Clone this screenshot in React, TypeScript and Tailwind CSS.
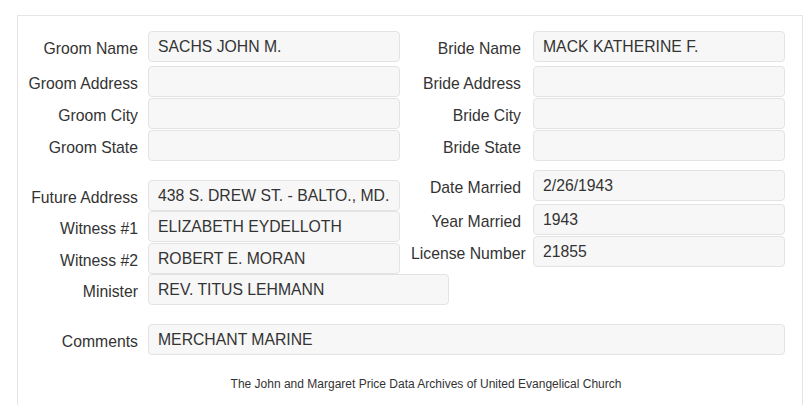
import React from "react";

const font = { fontFamily: '"Liberation Sans", Arial, sans-serif' };

function Field({
  label,
  value,
  labelW,
  boxW,
  gap,
  className = "",
}: {
  label: string;
  value?: string;
  labelW: string;
  boxW: string;
  gap: string;
  className?: string;
}) {
  return (
    <div className={`flex items-center ${className}`}>
      <div className={`${labelW} ${gap} shrink-0 whitespace-nowrap text-right pt-[4px] text-[15.75px] leading-[18px] text-[#333]`}>
        {label}
      </div>
      <div
        className={`${boxW} h-[31px] shrink-0 flex items-center rounded-[4px] border border-[#e3e3e3] bg-[#f7f7f7] pl-[9px] text-[15.75px] leading-[18px] text-[#333] whitespace-nowrap overflow-hidden`}
      >
        {value}
      </div>
    </div>
  );
}

export default function App() {
  const L = { labelW: "w-[120px]", gap: "mr-[10px]", boxW: "w-[252px]" };
  const R = { labelW: "w-[110px]", gap: "mr-[12px]", boxW: "w-[252px]" };
  return (
    <div className="w-[805px] h-[405px] overflow-hidden bg-white pt-[15px] pl-[17px] pr-[2px]" style={font}>
      <div className="h-[400px] border border-b-0 border-[#e5e5e5] pt-[15px]">
        <div className="flex">
          {/* Left column */}
          <div className="w-[382px] flex flex-col">
            <Field label="Groom Name" value="SACHS JOHN M." {...L} />
            <Field label="Groom Address" {...L} className="mt-[4px]" />
            <Field label="Groom City" {...L} className="mt-[1px]" />
            <Field label="Groom State" {...L} className="mt-[1px]" />
            <Field label="Future Address" value="438 S. DREW ST. - BALTO., MD." {...L} className="mt-[19px]" />
            <Field label="Witness #1" value="ELIZABETH EYDELLOTH" {...L} />
            <Field label="Witness #2" value="ROBERT E. MORAN" {...L} className="mt-[1px]" />
            <Field label="Minister" value="REV. TITUS LEHMANN" labelW="w-[120px]" gap="mr-[10px]" boxW="w-[301px]" />
          </div>
          {/* Right column */}
          <div className="flex flex-col pl-[11px]">
            <Field label="Bride Name" value="MACK KATHERINE F." {...R} />
            <Field label="Bride Address" {...R} className="mt-[4px]" />
            <Field label="Bride City" {...R} className="mt-[1px]" />
            <Field label="Bride State" {...R} className="mt-[1px]" />
            <Field label="Date Married" value="2/26/1943" {...R} className="mt-[9px]" />
            <Field label="Year Married" value="1943" {...R} className="mt-[3px]" />
            <Field label="License Number" value="21855" {...R} className="mt-[1px]" />
          </div>
        </div>
        <Field label="Comments" value="MERCHANT MARINE" labelW="w-[120px]" gap="mr-[10px]" boxW="w-[637px]" className="mt-[19px]" />
        <div className="mt-[22px] pl-[49px] pr-[17px] text-center text-[12px] leading-[14px] text-[#333]">
          The John and Margaret Price Data Archives of United Evangelical Church
        </div>
      </div>
    </div>
  );
}
